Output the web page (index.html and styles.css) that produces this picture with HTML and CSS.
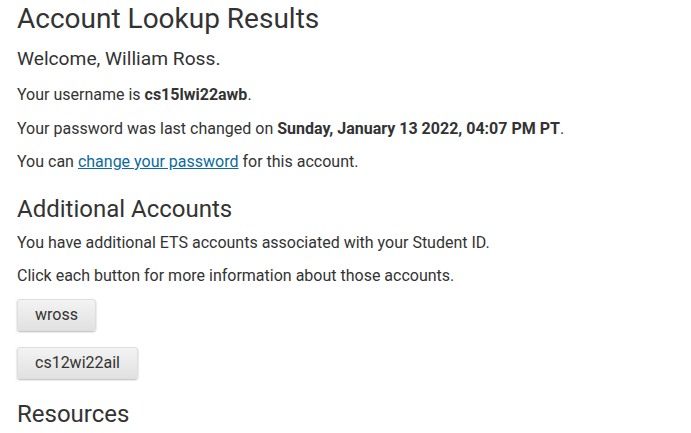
FILE: index.html
```html
<!DOCTYPE html>
<html>
<head>
<meta charset="utf-8">
<link rel="stylesheet" href="styles.css">
</head>
<body>
<main class="page">
  <h1 class="title">Account Lookup Results</h1>
  <p class="welcome">Welcome, William Ross.</p>
  <p class="line">Your username is <strong>cs15lwi22awb</strong>.</p>
  <p class="line">Your password was last changed on <strong>Sunday, January 13 2022, 04:07 PM PT</strong>.</p>
  <p class="line">You can <a href="#" class="link">change your password</a> for this account.</p>
  <h2 class="section section-first">Additional Accounts</h2>
  <p class="line">You have additional ETS accounts associated with your Student ID.</p>
  <p class="line">Click each button for more information about those accounts.</p>
  <div class="buttons">
    <button class="btn">wross</button>
    <button class="btn">cs12wi22ail</button>
  </div>
  <h2 class="section">Resources</h2>
</main>
</body>
</html>
```
FILE: styles.css
```css
html, body {
  margin: 0;
  padding: 0;
  background: #fff;
}
body {
  font-family: Roboto, "Liberation Sans", sans-serif;
  color: #333;
  font-size: 16px;
  line-height: 23.33px;
}
.page {
  padding: 0 17px;
}
.title {
  font-size: 28px;
  font-weight: 400;
  line-height: 34px;
  margin: 2px 0 10.3px;
}
.welcome {
  font-size: 19.2px;
  line-height: 26px;
  margin: 0 0 11px;
}
.line {
  margin: 0 0 10px;
}
.link {
  color: #0a6aa1;
  text-decoration: underline;
}
.section {
  font-size: 24px;
  font-weight: 400;
  line-height: 30px;
  margin: 20.4px 0 7px;
}
.buttons {
  display: flex;
  flex-direction: column;
  align-items: flex-start;
  gap: 16px;
  margin: 11.5px 0 20px;
}
.btn {
  font-family: inherit;
  font-size: 16px;
  color: #333;
  padding: 0 16px 0 16px;
  min-width: 79px;
  height: 32px;
  border: 1px solid #dedede;
  border-radius: 3px;
  background: linear-gradient(#f3f3f3, #e1e1e1);
  box-shadow: 0 1px 2px rgba(0,0,0,0.28);
  cursor: pointer;
}
.btn + .btn {
  padding: 0 17px;
}
```
